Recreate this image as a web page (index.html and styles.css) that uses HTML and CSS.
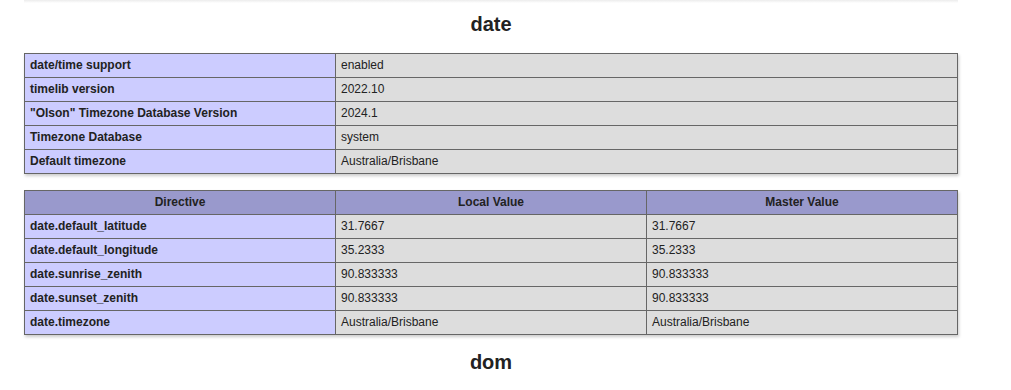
FILE: index.html
```html
<!DOCTYPE html>
<html lang="en">
<head>
  <meta charset="UTF-8" />
  <title>phpinfo()</title>
  <link rel="stylesheet" href="styles.css">
</head>
<body>
  <div class="center">
    <div class="prev-edge"></div>

    <h2>date</h2>
    <table>
      <tr><td class="e">date/time support </td><td class="v">enabled </td></tr>
      <tr><td class="e">timelib version </td><td class="v">2022.10 </td></tr>
      <tr><td class="e">&quot;Olson&quot; Timezone Database Version </td><td class="v">2024.1 </td></tr>
      <tr><td class="e">Timezone Database </td><td class="v">system </td></tr>
      <tr><td class="e">Default timezone </td><td class="v">Australia/Brisbane </td></tr>
    </table>
    <table>
      <tr class="h"><th>Directive</th><th>Local Value</th><th>Master Value</th></tr>
      <tr><td class="e">date.default_latitude</td><td class="v">31.7667</td><td class="v">31.7667</td></tr>
      <tr><td class="e">date.default_longitude</td><td class="v">35.2333</td><td class="v">35.2333</td></tr>
      <tr><td class="e">date.sunrise_zenith</td><td class="v">90.833333</td><td class="v">90.833333</td></tr>
      <tr><td class="e">date.sunset_zenith</td><td class="v">90.833333</td><td class="v">90.833333</td></tr>
      <tr><td class="e">date.timezone</td><td class="v">Australia/Brisbane</td><td class="v">Australia/Brisbane</td></tr>
    </table>

    <h2>dom</h2>
  </div>
</body>
</html>
```

FILE: styles.css
```css
body { background-color: #fff; color: #222; font-family: "Liberation Sans", Arial, sans-serif; margin: 0; }
.center { width: 934px; margin: 0 24px; text-align: center; }
.prev-edge { height: 3px; background: linear-gradient(#ececec, #fff); }
.center table { margin: 16px auto; text-align: left; }
.center th { text-align: center; }
table { border-collapse: collapse; border: 0; width: 934px; box-shadow: 1px 2px 3px #ccc; }
td, th { border: 1px solid #666; font-size: 12px; line-height: 15px; vertical-align: baseline; padding: 4px 5px; }
h2 { font-size: 20px; margin: 10px 0 17px; line-height: 23px; }
.e { background-color: #ccf; width: 300px; font-weight: bold; }
.h { background-color: #99c; font-weight: bold; }
.v { background-color: #ddd; max-width: 300px; word-wrap: break-word; }
```
